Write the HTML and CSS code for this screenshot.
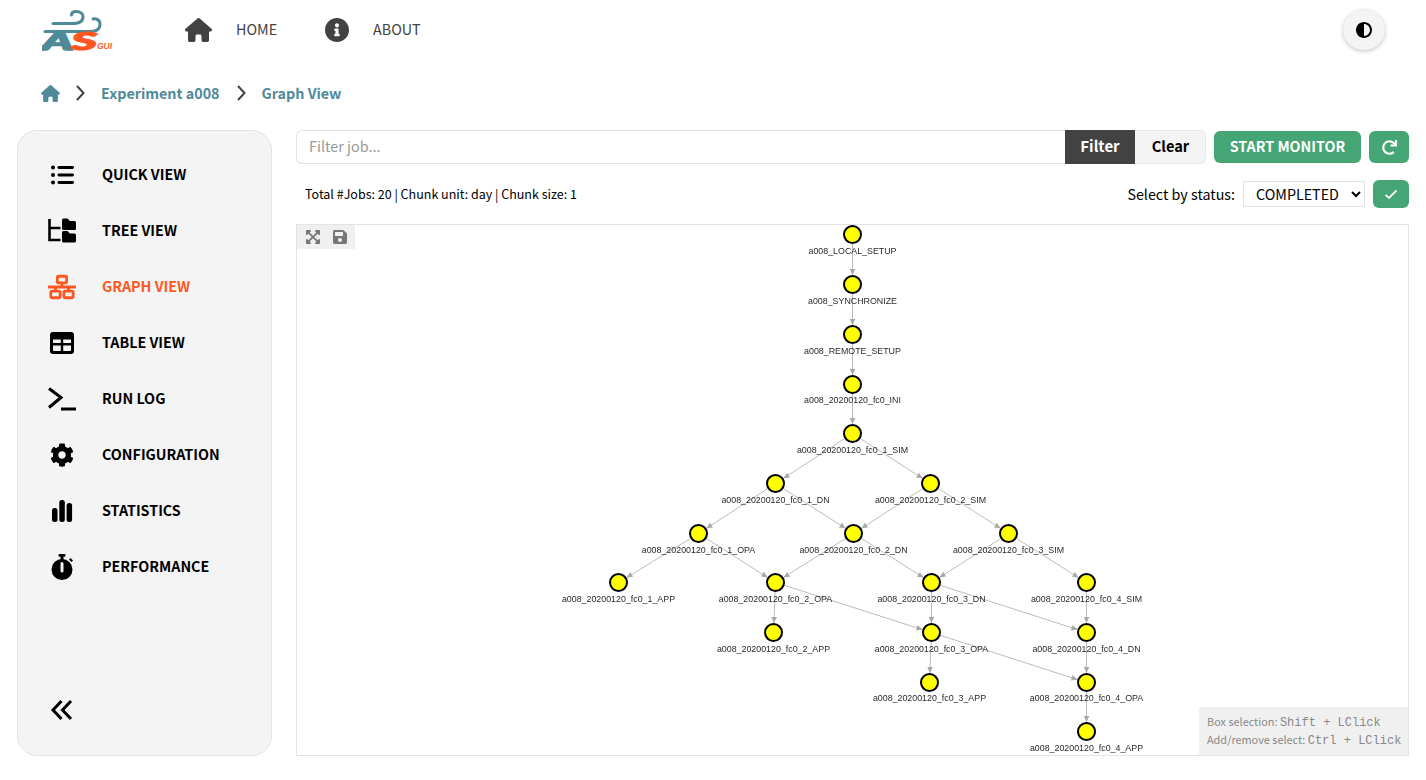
FILE: index.html
```html
<!DOCTYPE html>
<html lang="en">
<head>
  <meta charset="UTF-8">
  <meta name="viewport" content="width=device-width, initial-scale=1.0">
  <title>Autosubmit GUI - Graph View</title>
  <link rel="stylesheet" href="styles.css">
</head>
<body>
  <header class="topbar">
    <svg class="logo" viewBox="0 0 72 46" aria-label="AS GUI logo">
      <g class="logo-wind">
        <path d="M11 15.500H30C37 15.500 41 13 41 9C41 5 37 3.500 34 3.500C31 3.500 29.500 5 29.500 7"/>
        <path d="M3 23.500H48C54 23.500 58 21 58 16C58 12 54 10 51 11"/>
      </g>
      <text class="logo-a" x="0" y="41.500" textLength="31" lengthAdjust="spacingAndGlyphs">A</text>
      <text class="logo-s" x="29" y="41.500" textLength="26" lengthAdjust="spacingAndGlyphs">S</text>
      <text class="logo-gui" x="55" y="41" textLength="15" lengthAdjust="spacingAndGlyphs">GUI</text>
    </svg>
    <nav class="topnav">
      <a class="topnav-link">
        <svg class="topnav-home" viewBox="0 0 576 512"><path d="M575.800 255.500c0 18-15 32.100-32 32.100h-32l.7 160.200c0 2.700-.2 5.400-.5 8.100V472c0 22.100-17.900 40-40 40H456c-1.100 0-2.200 0-3.300-.1c-1.400 .1-2.800 .1-4.200 .1H416 392c-22.100 0-40-17.900-40-40V448 384c0-17.700-14.300-32-32-32H256c-17.700 0-32 14.300-32 32v64 24c0 22.100-17.900 40-40 40H160 128.100c-1.500 0-3-.1-4.500-.2c-1.200 .1-2.400 .2-3.600 .2H104c-22.100 0-40-17.900-40-40V360c0-.9 0-1.900 .1-2.800V287.600H32c-18 0-32-14-32-32.100c0-9 3-17 10-24L266.400 8c7-7 15-8 22-8s15 2 21 7L564.800 231.500c8 7 12 15 11 24z"/></svg>
        <span>HOME</span>
      </a>
      <a class="topnav-link">
        <svg class="topnav-info" viewBox="8 8 496 496"><path d="M256 8C119.043 8 8 119.083 8 256c0 136.997 111.043 248 248 248s248-111.003 248-248C504 119.083 392.957 8 256 8zm0 110c23.196 0 42 18.804 42 42s-18.804 42-42 42-42-18.804-42-42 18.804-42 42-42zm56 254c0 6.627-5.373 12-12 12h-88c-6.627 0-12-5.373-12-12v-24c0-6.627 5.373-12 12-12h12v-64h-12c-6.627 0-12-5.373-12-12v-24c0-6.627 5.373-12 12-12h64c6.627 0 12 5.373 12 12v100h12c6.627 0 12 5.373 12 12v24z"/></svg>
        <span>ABOUT</span>
      </a>
    </nav>
    <button class="theme-btn">
      <svg viewBox="8 8 496 496"><path d="M8 256c0 136.966 111.033 248 248 248s248-111.034 248-248S392.966 8 256 8 8 119.033 8 256zm248 184V72c101.705 0 184 82.311 184 184 0 101.705-82.311 184-184 184z"/></svg>
    </button>
  </header>

  <div class="breadcrumb">
    <svg class="crumb-home" viewBox="0 0 576 512"><path d="M575.800 255.500c0 18-15 32.100-32 32.100h-32l.7 160.200c0 2.700-.2 5.400-.5 8.100V472c0 22.100-17.900 40-40 40H456c-1.100 0-2.200 0-3.300-.1c-1.400 .1-2.800 .1-4.200 .1H416 392c-22.100 0-40-17.900-40-40V448 384c0-17.700-14.300-32-32-32H256c-17.700 0-32 14.300-32 32v64 24c0 22.100-17.900 40-40 40H160 128.100c-1.500 0-3-.1-4.500-.2c-1.200 .1-2.400 .2-3.600 .2H104c-22.100 0-40-17.900-40-40V360c0-.9 0-1.900 .1-2.800V287.600H32c-18 0-32-14-32-32.100c0-9 3-17 10-24L266.400 8c7-7 15-8 22-8s15 2 21 7L564.800 231.500c8 7 12 15 11 24z"/></svg>
    <svg class="crumb-sep" viewBox="0 0 9 16"><path d="M1 1l6.500 7L1 15"/></svg>
    <a class="crumb-link">Experiment a008</a>
    <svg class="crumb-sep" viewBox="0 0 9 16"><path d="M1 1l6.500 7L1 15"/></svg>
    <a class="crumb-link">Graph View</a>
  </div>

  <div class="layout">
    <aside class="sidebar">
      <ul class="side-menu">
        <li class="side-item">
          <svg class="side-icon" viewBox="0 0 28 28"><circle cx="5" cy="6.500" r="2"/><circle cx="5" cy="14" r="2"/><circle cx="5" cy="21.500" r="2"/><rect x="9.500" y="5" width="16.500" height="3" rx="1.400"/><rect x="9.500" y="12.500" width="16.500" height="3" rx="1.400"/><rect x="9.500" y="20" width="16.500" height="3" rx="1.400"/></svg>
          <span>QUICK VIEW</span>
        </li>
        <li class="side-item">
          <svg class="side-icon" viewBox="0 0 28 28"><path class="icon-line" d="M1.500 2V23H12.500M1.500 11H12.500"/><path d="M14 3a1.500 1.500 0 0 1 1.500-1.500h4l2.500 2.500h4.500a1.500 1.500 0 0 1 1.500 1.500v6a1.500 1.500 0 0 1-1.500 1.500h-11a1.500 1.500 0 0 1-1.500-1.500zM14 15.500a1.500 1.500 0 0 1 1.500-1.500h4l2.500 2.500h4.500a1.500 1.500 0 0 1 1.500 1.500v6a1.500 1.500 0 0 1-1.500 1.500h-11a1.500 1.500 0 0 1-1.500-1.500z"/></svg>
          <span>TREE VIEW</span>
        </li>
        <li class="side-item side-item-active">
          <svg class="side-icon" viewBox="0 0 30 28"><g class="icon-line icon-thin"><rect x="10" y="2.500" width="10" height="7" rx="1.500"/><rect x="3" y="18.500" width="10" height="7" rx="1.500"/><rect x="17" y="18.500" width="10" height="7" rx="1.500"/><path d="M0 14H30M15 9.500V14M8 14V18.500M22 14V18.500"/></g></svg>
          <span>GRAPH VIEW</span>
        </li>
        <li class="side-item">
          <svg class="side-icon" viewBox="0 0 28 28"><path fill-rule="evenodd" d="M5 3H23a3 3 0 0 1 3 3V22a3 3 0 0 1-3 3H5a3 3 0 0 1-3-3V6a3 3 0 0 1 3-3zM5 10.500V14H12.800V10.500zM15.200 10.500V14H23V10.500zM5 16.400V21a1 1 0 0 0 1 1H12.800V16.400zM15.200 16.400V22H22a1 1 0 0 0 1-1V16.400z"/></svg>
          <span>TABLE VIEW</span>
        </li>
        <li class="side-item">
          <svg class="side-icon" viewBox="0 0 28 28"><path class="icon-line icon-bold" d="M1 3.500L13 12.500L1 22.500M13 24H28"/></svg>
          <span>RUN LOG</span>
        </li>
        <li class="side-item">
          <svg class="side-icon side-icon-gear" viewBox="0 0 512 512"><path d="M487.400 315.700l-42.600-24.600c4.300-23.200 4.300-47 0-70.200l42.600-24.600c4.900-2.800 7.100-8.600 5.500-14-11.100-35.600-30-67.800-54.700-94.600-3.800-4.100-10-5.100-14.800-2.300L380.800 110c-17.900-15.400-38.500-27.300-60.800-35.100V25.800c0-5.600-3.900-10.500-9.400-11.700-36.700-8.200-74.300-7.800-109.200 0-5.500 1.200-9.400 6.100-9.400 11.700V75c-22.200 7.900-42.800 19.800-60.800 35.100L88.700 85.500c-4.900-2.800-11-1.900-14.800 2.300-24.700 26.700-43.600 58.900-54.700 94.600-1.700 5.400.6 11.200 5.500 14L67.300 221c-4.300 23.200-4.300 47 0 70.200l-42.600 24.600c-4.900 2.800-7.100 8.600-5.500 14 11.100 35.600 30 67.800 54.700 94.600 3.800 4.100 10 5.100 14.800 2.300l42.600-24.600c17.900 15.400 38.500 27.300 60.800 35.100v49.200c0 5.600 3.900 10.500 9.400 11.700 36.700 8.200 74.300 7.800 109.200 0 5.500-1.200 9.400-6.100 9.400-11.700v-49.200c22.200-7.900 42.800-19.800 60.800-35.100l42.600 24.600c4.900 2.800 11 1.900 14.800-2.300 24.700-26.700 43.600-58.900 54.700-94.600 1.500-5.500-.7-11.300-5.600-14.100zM256 336c-44.100 0-80-35.900-80-80s35.900-80 80-80 80 35.900 80 80-35.900 80-80 80z"/></svg>
          <span>CONFIGURATION</span>
        </li>
        <li class="side-item">
          <svg class="side-icon" viewBox="0 0 28 28"><rect x="4" y="11" width="5.500" height="14" rx="2.500"/><rect x="11.300" y="3" width="5.500" height="22" rx="2.500"/><rect x="18.600" y="6" width="5.500" height="19" rx="2.500"/></svg>
          <span>STATISTICS</span>
        </li>
        <li class="side-item">
          <svg class="side-icon" viewBox="0 0 28 28"><path fill-rule="evenodd" d="M14 6a10.500 10.500 0 1 1 0 21a10.500 10.500 0 0 1 0-21zM12.500 10.500V18a1.500 1.500 0 0 0 3 0V10.500a1.500 1.500 0 0 0-3 0z"/><rect x="10.500" y="1" width="7" height="2.800" rx="1"/><rect x="12.500" y="3" width="3" height="4"/><path d="M21 6.500l1.500-1.500 2.500 2.500-1.500 1.500z"/></svg>
          <span>PERFORMANCE</span>
        </li>
      </ul>
      <button class="collapse-btn">
        <svg viewBox="0 0 24 22"><path d="M11.500 2L3 11l8.500 9M21 2L12.500 11l8.500 9"/></svg>
      </button>
    </aside>

    <main class="content">
      <div class="filter-row">
        <div class="filter-group">
          <input class="filter-input" type="text" placeholder="Filter job...">
          <button class="filter-btn">Filter</button>
          <button class="clear-btn">Clear</button>
        </div>
        <button class="green-btn monitor-btn">START MONITOR</button>
        <button class="green-btn refresh-btn">
          <svg viewBox="0 0 512 512"><path d="M500.330 0h-47.410a12 12 0 0 0-12 12.570l4 82.760A247.420 247.420 0 0 0 256 8C119.340 8 7.900 119.530 8 256.190 8.100 393.070 119.100 504 256 504a247.100 247.100 0 0 0 166.180-63.910 12 12 0 0 0 .48-17.430l-34-34a12 12 0 0 0-16.380-.55A176 176 0 1 1 402.100 157.800l-101.530-4.870a12 12 0 0 0-12.570 12v47.410a12 12 0 0 0 12 12h200.330a12 12 0 0 0 12-12V12a12 12 0 0 0-12-12z"/></svg>
        </button>
      </div>

      <div class="info-row">
        <p class="job-info">Total #Jobs: 20 | Chunk unit: day | Chunk size: 1</p>
        <label class="status-label" for="status">Select by status:</label>
        <select class="status-select" id="status"><option>COMPLETED</option></select>
        <button class="green-btn check-btn">
          <svg viewBox="0 0 14 11"><path d="M1.500 5.800L5 9l7.500-7.500"/></svg>
        </button>
      </div>

      <section class="graph-box">
        <div class="graph-tools">
          <svg class="tool-icon" viewBox="0 0 448 512"><path d="M448 344v112a23.940 23.940 0 0 1-24 24H312c-21.390 0-32.090-25.900-17-41l36.200-36.200L224 295.600 116.770 402.900 153 439c15.090 15.100 4.390 41-17 41H24a23.940 23.940 0 0 1-24-24V344c0-21.400 25.890-32.100 41-17l36.190 36.200L184.460 256 77.180 148.700 41 185c-15.100 15.100-41 4.400-41-17V56a23.940 23.940 0 0 1 24-24h112c21.390 0 32.090 25.900 17 41l-36.200 36.200L224 216.400l107.230-107.300L295 73c-15.090-15.100-4.390-41 17-41h112a23.940 23.940 0 0 1 24 24v112c0 21.400-25.890 32.100-41 17l-36.190-36.200L263.540 256l107.280 107.300L407 327.100c15.100-15.200 41-4.500 41 16.900z"/></svg>
          <svg class="tool-icon" viewBox="0 0 448 512"><path d="M433.941 129.941l-83.882-83.882A48 48 0 0 0 316.118 32H48C21.490 32 0 53.490 0 80v352c0 26.510 21.490 48 48 48h352c26.510 0 48-21.490 48-48V163.882a48 48 0 0 0-14.059-33.941zM224 416c-35.346 0-64-28.654-64-64 0-35.346 28.654-64 64-64s64 28.654 64 64c0 35.346-28.654 64-64 64zm96-304.520V212c0 6.627-5.373 12-12 12H76c-6.627 0-12-5.373-12-12V108c0-6.627 5.373-12 12-12h228.520c3.183 0 6.235 1.264 8.485 3.515l3.480 3.480A11.996 11.996 0 0 1 320 111.480z"/></svg>
        </div>

        <svg class="graph-canvas" viewBox="296.500 224.500 1111 530">
          <defs>
            <marker id="arrow" markerUnits="userSpaceOnUse" markerWidth="8" markerHeight="8" refX="15.500" refY="4" orient="auto" overflow="visible">
              <path d="M0 1.200L6 4L0 6.800z" fill="#a8a8a8"/>
            </marker>
          </defs>
          <g class="edges">
            <line x1="852" y1="234" x2="852" y2="284"/>
            <line x1="852" y1="284" x2="852" y2="334"/>
            <line x1="852" y1="334" x2="852" y2="384"/>
            <line x1="852" y1="384" x2="852" y2="433"/>
            <line x1="852" y1="433" x2="775" y2="483"/>
            <line x1="852" y1="433" x2="930" y2="483"/>
            <line x1="775" y1="483" x2="698" y2="533"/>
            <line x1="775" y1="483" x2="853" y2="533"/>
            <line x1="930" y1="483" x2="853" y2="533"/>
            <line x1="930" y1="483" x2="1008" y2="533"/>
            <line x1="698" y1="533" x2="618" y2="582"/>
            <line x1="698" y1="533" x2="775" y2="582"/>
            <line x1="853" y1="533" x2="775" y2="582"/>
            <line x1="853" y1="533" x2="931" y2="582"/>
            <line x1="1008" y1="533" x2="931" y2="582"/>
            <line x1="1008" y1="533" x2="1086" y2="582"/>
            <line x1="775" y1="582" x2="773" y2="632"/>
            <line x1="775" y1="582" x2="931" y2="632"/>
            <line x1="931" y1="582" x2="931" y2="632"/>
            <line x1="931" y1="582" x2="1086" y2="632"/>
            <line x1="1086" y1="582" x2="1086" y2="632"/>
            <line x1="931" y1="632" x2="929" y2="682"/>
            <line x1="931" y1="632" x2="1086" y2="682"/>
            <line x1="1086" y1="632" x2="1086" y2="682"/>
            <line x1="1086" y1="682" x2="1086" y2="731"/>
          </g>
          <g class="nodes">
            <circle cx="852" cy="234" r="8.500"/>
            <circle cx="852" cy="284" r="8.500"/>
            <circle cx="852" cy="334" r="8.500"/>
            <circle cx="852" cy="384" r="8.500"/>
            <circle cx="852" cy="433" r="8.500"/>
            <circle cx="775" cy="483" r="8.500"/>
            <circle cx="930" cy="483" r="8.500"/>
            <circle cx="698" cy="533" r="8.500"/>
            <circle cx="853" cy="533" r="8.500"/>
            <circle cx="1008" cy="533" r="8.500"/>
            <circle cx="618" cy="582" r="8.500"/>
            <circle cx="775" cy="582" r="8.500"/>
            <circle cx="931" cy="582" r="8.500"/>
            <circle cx="1086" cy="582" r="8.500"/>
            <circle cx="773" cy="632" r="8.500"/>
            <circle cx="931" cy="632" r="8.500"/>
            <circle cx="1086" cy="632" r="8.500"/>
            <circle cx="929" cy="682" r="8.500"/>
            <circle cx="1086" cy="682" r="8.500"/>
            <circle cx="1086" cy="731" r="8.500"/>
          </g>
          <g class="labels">
            <text x="852" y="253">a008_LOCAL_SETUP</text>
            <text x="852" y="303">a008_SYNCHRONIZE</text>
            <text x="852" y="353">a008_REMOTE_SETUP</text>
            <text x="852" y="402">a008_20200120_fc0_INI</text>
            <text x="852" y="452">a008_20200120_fc0_1_SIM</text>
            <text x="775" y="502">a008_20200120_fc0_1_DN</text>
            <text x="930" y="502">a008_20200120_fc0_2_SIM</text>
            <text x="698" y="552">a008_20200120_fc0_1_OPA</text>
            <text x="853" y="552">a008_20200120_fc0_2_DN</text>
            <text x="1008" y="552">a008_20200120_fc0_3_SIM</text>
            <text x="618" y="601">a008_20200120_fc0_1_APP</text>
            <text x="775" y="601">a008_20200120_fc0_2_OPA</text>
            <text x="931" y="601">a008_20200120_fc0_3_DN</text>
            <text x="1086" y="601">a008_20200120_fc0_4_SIM</text>
            <text x="773" y="651">a008_20200120_fc0_2_APP</text>
            <text x="931" y="651">a008_20200120_fc0_3_OPA</text>
            <text x="1086" y="651">a008_20200120_fc0_4_DN</text>
            <text x="929" y="700">a008_20200120_fc0_3_APP</text>
            <text x="1086" y="700">a008_20200120_fc0_4_OPA</text>
            <text x="1086" y="750">a008_20200120_fc0_4_APP</text>
          </g>
        </svg>

        <div class="graph-hint">
          <div>Box selection: <code>Shift + LClick</code></div>
          <div>Add/remove select: <code>Ctrl + LClick</code></div>
        </div>
      </section>
    </main>
  </div>
</body>
</html>
```

FILE: styles.css
```css
* {
  box-sizing: border-box;
}
body {
  margin: 0;
  height: 780px;
  overflow: hidden;
  background-color: #fff;
  color: #000;
  font-family: "Noto Sans CJK JP", "Noto Sans", sans-serif;
  font-size: 14.300px;
}
button {
  font-family: inherit;
  border: none;
  padding: 0;
  cursor: pointer;
}
svg {
  display: block;
  flex: none;
}

/* top bar */
.topbar {
  display: flex;
  align-items: center;
  height: 60px;
  padding: 0 41px 0 42px;
}
.logo {
  width: 72px;
  height: 46px;
  margin-top: 1px;
}
.logo-wind path {
  fill: none;
  stroke: #4f8a99;
  stroke-width: 3;
  stroke-linecap: round;
}
.logo-a, .logo-s {
  font-family: Lato, "Liberation Sans", sans-serif;
  font-weight: 900;
  font-style: italic;
  font-size: 24px;
}
.logo-a {
  fill: #4f8a99;
  stroke: #4f8a99;
  stroke-width: 1.600px;
}
.logo-s {
  fill: #ff5722;
  stroke: #ff5722;
  stroke-width: 1.200px;
}
.logo-gui {
  font-family: "Liberation Sans", sans-serif;
  font-weight: bold;
  font-style: italic;
  font-size: 8.500px;
  fill: #ff5722;
}
.topnav {
  display: flex;
  align-items: center;
  margin-left: 71px;
  gap: 48px;
  flex: 1;
}
.topnav-link {
  display: flex;
  align-items: center;
  color: #424242;
}
.topnav-link span {
  margin-top: -3px;
}
.topnav-home {
  width: 27px;
  height: 24px;
  margin-right: 24px;
  fill: #424242;
}
.topnav-info {
  width: 24px;
  height: 24px;
  margin-right: 24px;
  fill: #424242;
}
.theme-btn {
  display: flex;
  align-items: center;
  justify-content: center;
  width: 42px;
  height: 40px;
  border-radius: 50%;
  background-color: #f4f4f4;
  box-shadow: 0 1px 4px rgba(0, 0, 0, 0.25);
}
.theme-btn svg {
  width: 16px;
  height: 16px;
}

/* breadcrumb */
.breadcrumb {
  display: flex;
  align-items: center;
  height: 24px;
  margin-top: 21px;
  padding-left: 41px;
}
.crumb-home {
  width: 19px;
  height: 17px;
  margin-right: -1px;
  fill: #4f8a99;
}
.crumb-sep {
  width: 9px;
  height: 16px;
  margin: 0 16px 0 17px;
}
.crumb-sep path {
  fill: none;
  stroke: #424242;
  stroke-width: 2;
}
.crumb-link {
  color: #4f8a99;
  font-weight: 700;
  margin-top: -1px;
}

/* layout */
.layout {
  display: flex;
  gap: 24px;
  margin-top: 25px;
  padding: 0 17px;
}
.sidebar {
  display: flex;
  flex-direction: column;
  width: 255px;
  height: 626px;
  padding-top: 16px;
  background-color: #f4f4f4;
  border: 1px solid #e3e3e3;
  border-radius: 20px;
}
.side-menu {
  list-style: none;
  margin: 0;
  padding: 0;
  flex: 1;
}
.side-item {
  display: flex;
  align-items: center;
  height: 56px;
  padding-left: 30px;
  font-weight: 700;
}
.side-item span {
  margin-left: 26px;
  margin-top: -3px;
}
.side-icon {
  width: 28px;
  height: 28px;
}
.side-icon-gear {
  padding: 2px;
}
.side-item-active {
  color: #ff5722;
  fill: #ff5722;
}
.icon-line {
  fill: none;
  stroke: currentColor;
  stroke-width: 2.600;
}
.icon-thin {
  stroke-width: 3;
}
.icon-bold {
  stroke-width: 3;
}
.collapse-btn {
  align-self: flex-start;
  width: 24px;
  margin: 0 0 34px 32px;
  background: none;
}
.collapse-btn svg {
  width: 24px;
  height: 22px;
}
.collapse-btn path {
  fill: none;
  stroke: #000;
  stroke-width: 3;
}

/* filter row */
.content {
  flex: 1;
  min-width: 0;
}
.filter-row {
  display: flex;
  align-items: center;
  height: 34px;
}
.filter-group {
  display: flex;
  flex: 1;
  height: 34px;
}
.filter-input {
  flex: 1;
  min-width: 0;
  padding: 0 12px 3px;
  border: 1px solid #e3e3e3;
  border-right: none;
  border-radius: 6px 0 0 6px;
  font-family: inherit;
  font-size: 14.400px;
  outline: none;
}
.filter-input::placeholder {
  color: #9a9a9a;
}
.filter-btn {
  width: 70px;
  padding-bottom: 3px;
  background-color: #424242;
  color: #fff;
  font-weight: 700;
  font-size: 15px;
}
.clear-btn {
  width: 71px;
  padding: 0 0 3px 1px;
  background-color: #f4f4f4;
  border: 1px solid #e8e8e8;
  border-left: none;
  border-radius: 0 6px 6px 0;
  color: #000;
  font-weight: 700;
  font-size: 14.600px;
}
.green-btn {
  display: flex;
  align-items: center;
  justify-content: center;
  background-color: #46a574;
  color: #fff;
  border-radius: 6px;
}
.monitor-btn {
  width: 147px;
  height: 32px;
  margin-left: 8px;
  padding-bottom: 3px;
  font-weight: 700;
  font-size: 14.300px;
}
.refresh-btn {
  width: 40px;
  height: 32px;
  margin-left: 8px;
}
.refresh-btn svg {
  width: 15px;
  height: 15px;
  fill: #fff;
}

/* info row */
.info-row {
  display: flex;
  align-items: center;
  height: 28px;
  margin-top: 16px;
}
.job-info {
  flex: 1;
  margin: -2px 0 0 9px;
  font-size: 12.500px;
}
.status-label {
  margin: -2px 8px 0 0;
}
.status-select {
  width: 122px;
  height: 26px;
  padding: 0 0 2px 8px;
  background-color: #fff;
  border: 1px solid #e3e3e3;
  border-radius: 0;
  color: #000;
  font-family: inherit;
  font-size: 14.300px;
}
.check-btn {
  width: 36px;
  height: 28px;
  margin-left: 8px;
}
.check-btn svg {
  width: 14px;
  height: 11px;
}
.check-btn path {
  fill: none;
  stroke: #fff;
  stroke-width: 1.800;
}

/* graph */
.graph-box {
  position: relative;
  height: 532px;
  margin-top: 16px;
  border: 1px solid #e3e3e3;
}
.graph-canvas {
  width: 1111px;
  height: 530px;
  will-change: transform;
}
.graph-tools {
  position: absolute;
  top: 0;
  left: 0;
  z-index: 1;
  display: flex;
  align-items: center;
  gap: 13px;
  width: 58px;
  height: 24px;
  padding-left: 9px;
  background-color: #f0f0f0;
}
.tool-icon {
  width: 14px;
  height: 16px;
  fill: #777;
}
.edges line {
  stroke: #bcbcbc;
  stroke-width: 1;
  marker-end: url(#arrow);
}
.nodes circle {
  fill: #ffff00;
  stroke: #000;
  stroke-width: 2;
}
.labels text {
  font-family: "Liberation Sans", sans-serif;
  font-size: 8.850px;
  text-anchor: middle;
  fill: #2a2a2a;
}
.graph-hint {
  position: absolute;
  right: 0;
  bottom: 0;
  z-index: 1;
  width: 209px;
  height: 48px;
  padding: 6px 8px;
  background-color: #f0f0f0;
  color: #888;
  font-size: 10.900px;
  line-height: 16px;
  white-space: nowrap;
}
.graph-hint code {
  font-family: "Liberation Mono", monospace;
  font-size: 12px;
}
```
